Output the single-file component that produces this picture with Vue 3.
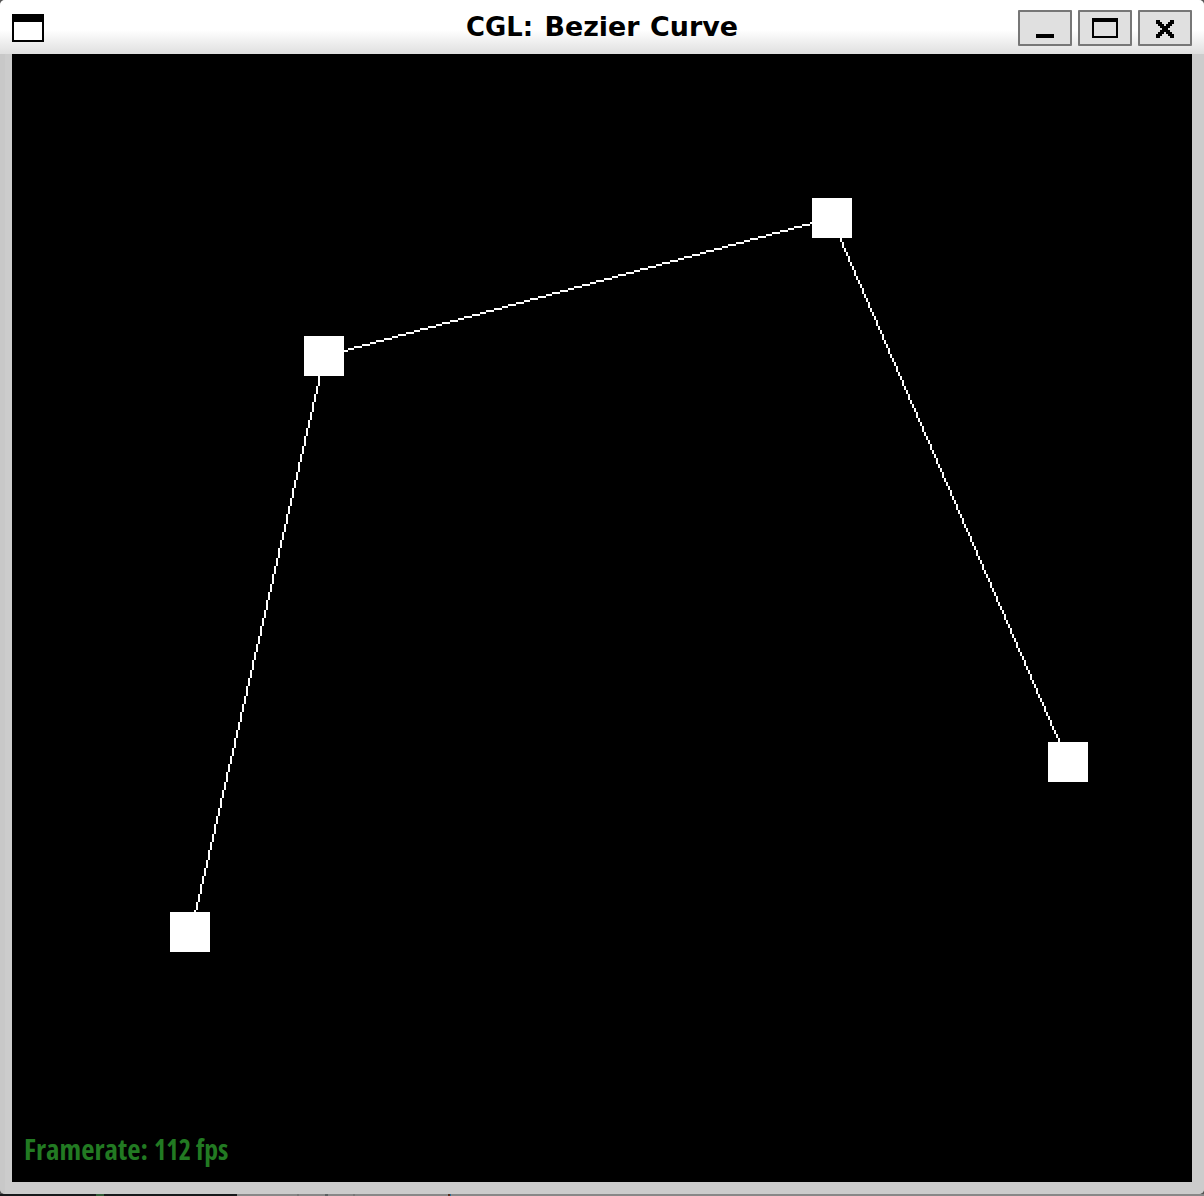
<script setup>
const points = [
  { x: 89, y: 439 },
  { x: 156, y: 151 },
  { x: 410, y: 82 },
  { x: 528, y: 354 },
]

const segments = [
  [89.42, 439, 156.28, 151],
  [156, 151.06, 410, 81.74],
  [409.8, 82, 528.22, 354],
]

// Aliased line: one cell per step along the major axis.
function rasterize([x0, y0, x1, y1]) {
  const dx = x1 - x0
  const dy = y1 - y0
  let d = ''
  if (Math.abs(dx) > Math.abs(dy)) {
    const from = Math.round(Math.min(x0, x1))
    const to = Math.round(Math.max(x0, x1))
    for (let x = from; x < to; x++) {
      const y = Math.floor(y0 + ((x - x0) * dy) / dx)
      d += `M${x} ${y}h1v1h-1z`
    }
  } else {
    const from = Math.round(Math.min(y0, y1))
    const to = Math.round(Math.max(y0, y1))
    for (let y = from; y < to; y++) {
      const x = Math.floor(x0 + ((y - y0 + 0.02) * dx) / dy)
      d += `M${x} ${y}h1v1h-1z`
    }
  }
  return d
}

const paths = segments.map(rasterize)

const closeGlyph = [
  '##.....##',
  '###...###',
  '.###.###.',
  '..#####..',
  '...###...',
  '..#####..',
  '.###.###.',
  '###...###',
  '##.....##',
]
const closePath = closeGlyph
  .flatMap((row, y) => [...row].map((c, x) => (c === '#' ? `M${18 + x * 2} ${10 + y * 2}h2v2h-2z` : '')))
  .join('')
</script>

<template>
  <div class="desktop">
    <div class="window">
      <header class="titlebar">
        <svg class="app-icon" width="32" height="28" shape-rendering="crispEdges">
          <rect width="32" height="28" fill="#000" />
          <rect x="2" y="8" width="28" height="18" fill="#fff" />
        </svg>
        <svg class="title" width="300" height="54">
          <text x="14" y="35.5" textLength="67" lengthAdjust="spacingAndGlyphs">CGL:</text>
          <text x="92.5" y="35.5" textLength="95" lengthAdjust="spacingAndGlyphs">Bezier</text>
          <text x="198" y="35.5" textLength="88" lengthAdjust="spacingAndGlyphs">Curve</text>
        </svg>
        <div class="controls">
          <button class="control" aria-label="Minimize">
            <svg width="54" height="36" shape-rendering="crispEdges"><rect x="18" y="24" width="18" height="4" /></svg>
          </button>
          <button class="control" aria-label="Maximize">
            <svg width="54" height="36" shape-rendering="crispEdges">
              <path fill-rule="evenodd" d="M14 8h26v20H14zM16 12v14h22V12z" />
            </svg>
          </button>
          <button class="control" aria-label="Close">
            <svg width="54" height="36" shape-rendering="crispEdges">
              <path :d="closePath" />
            </svg>
          </button>
        </div>
      </header>
      <main class="frame">
        <svg class="stage" width="1180" height="1128" viewBox="0 0 590 564" shape-rendering="crispEdges">
          <path v-for="(d, i) in paths" :key="'l' + i" :d="d" fill="#fff" />
          <rect v-for="(p, i) in points" :key="'p' + i" :x="p.x - 10" :y="p.y - 10" width="20" height="20" fill="#fff" />
          <g class="fps">
            <text x="6" y="553" textLength="62" lengthAdjust="spacingAndGlyphs">Framerate:</text>
            <text x="71" y="553" textLength="18.5" lengthAdjust="spacingAndGlyphs">112</text>
            <text x="92" y="553" textLength="16.2" lengthAdjust="spacingAndGlyphs">fps</text>
          </g>
        </svg>
      </main>
    </div>
    <svg class="below" width="1204" height="2" shape-rendering="crispEdges">
      <rect width="1204" height="2" fill="#888" />
      <rect width="237" height="2" fill="#17191b" />
      <rect x="96" width="8" height="2" fill="#315b37" />
      <rect x="297" width="2" height="2" fill="#777" />
      <rect x="325" width="3" height="2" fill="#5b6061" />
      <rect x="353" width="2" height="2" fill="#777" />
      <rect x="448" width="2" height="2" fill="#563020" />
      <rect x="450" width="1" height="2" fill="#276b98" />
    </svg>
  </div>
</template>

<style>
body { margin: 0; overflow: hidden; }
</style>

<style scoped>
.desktop {
  display: flex;
  flex-direction: column;
  width: 1204px;
  height: 1196px;
  background: #555;
}
.window {
  display: flex;
  flex-direction: column;
  height: 1194px;
  border-radius: 5px;
  overflow: hidden;
  background: #ccc;
}
.titlebar {
  display: grid;
  grid-template-columns: 1fr 300px 1fr;
  align-items: center;
  height: 54px;
  box-sizing: border-box;
  padding: 0 12px;
  background: linear-gradient(#fff 0, #fff 30px, #dfdfdf 54px);
}
.app-icon { margin-top: 2px; }
.title {
  font: bold 27.4px "DejaVu Sans", sans-serif;
}
.controls {
  display: flex;
  justify-content: flex-end;
  gap: 6px;
  margin-top: 2px;
}
.control {
  display: flex;
  width: 54px;
  height: 36px;
  padding: 0;
  border: 0;
  border-radius: 1px;
  background: #e0e0e0;
  box-shadow: inset 0 0 0 2px #777;
}
.frame {
  display: flex;
  padding: 0 12px 12px;
  background: linear-gradient(90deg, #c8c8c8 5px, #ccc 5px);
}
.stage { display: block; background: #000; }
.fps {
  font-family: "Open Sans", "Noto Sans", sans-serif;
  font-size: 14px;
  font-weight: 700;
  font-stretch: 75%;
  fill: #227a22;
}
.below { display: block; }
</style>
